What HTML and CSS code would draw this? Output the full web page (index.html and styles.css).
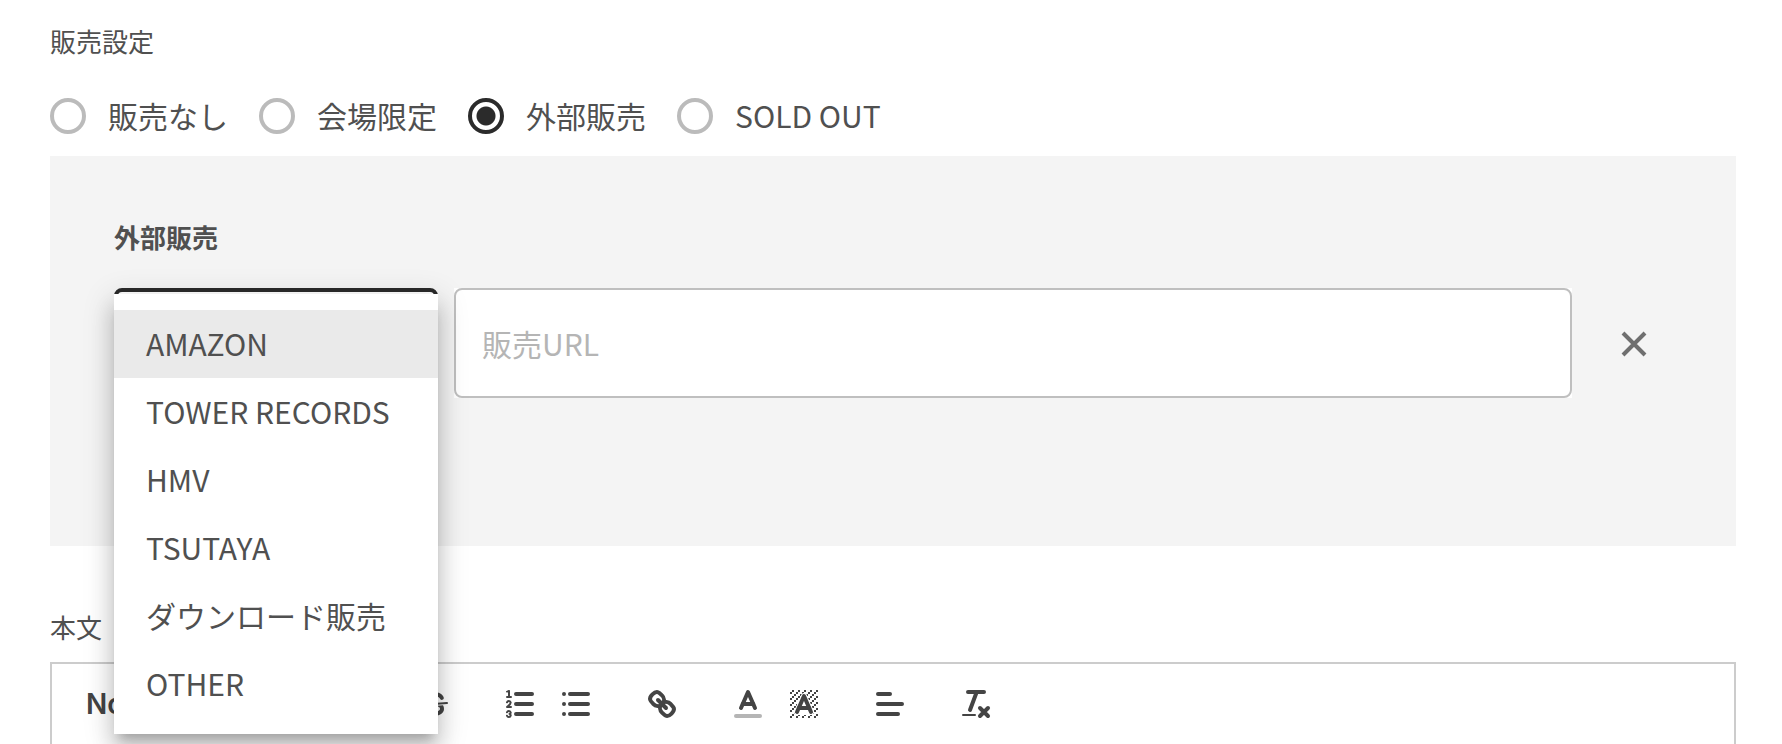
FILE: index.html
```html
<!DOCTYPE html>
<html lang="ja">
<head>
    <meta charset="utf-8">
    <meta name="viewport" content="width=device-width, initial-scale=1">
    <title>販売設定</title>
    <link rel="stylesheet" href="styles.css">
</head>
<body>
    <form class="page">
        <!-- Sales type -->
        <fieldset class="sales">
            <legend class="field-label">販売設定</legend>
            <div class="radio-group">
                <label class="radio"><input type="radio" name="sales" value="none"><span>販売なし</span></label>
                <label class="radio"><input type="radio" name="sales" value="venue"><span>会場限定</span></label>
                <label class="radio"><input type="radio" name="sales" value="external" checked><span>外部販売</span></label>
                <label class="radio"><input type="radio" name="sales" value="soldout"><span>SOLD OUT</span></label>
            </div>
        </fieldset>

        <!-- External shop links -->
        <section class="panel">
            <label class="panel-title" for="shop">外部販売</label>
            <div class="shop-row">
                <div class="shop-select">
                    <select id="shop">
                        <option value="" selected></option>
                        <option>AMAZON</option>
                        <option>TOWER RECORDS</option>
                        <option>HMV</option>
                        <option>TSUTAYA</option>
                        <option>ダウンロード販売</option>
                        <option>OTHER</option>
                    </select>
                    <div class="menu">
                        <button type="button" class="menu-item active">AMAZON</button>
                        <button type="button" class="menu-item">TOWER RECORDS</button>
                        <button type="button" class="menu-item">HMV</button>
                        <button type="button" class="menu-item">TSUTAYA</button>
                        <button type="button" class="menu-item">ダウンロード販売</button>
                        <button type="button" class="menu-item">OTHER</button>
                    </div>
                </div>
                <div class="url-field">
                    <input type="url" class="url-input" placeholder="販売URL" aria-label="販売URL">
                </div>
                <button type="button" class="remove" aria-label="削除">
                    <svg viewBox="0 0 36 36"><path d="M7 7 29 29M29 7 7 29"/></svg>
                </button>
            </div>
        </section>

        <!-- Body editor -->
        <label class="field-label" for="body-text">本文</label>
        <div class="editor">
            <div class="toolbar">
                <div class="format-group">
                    <button type="button" class="heading-picker">Normal</button>
                </div>
                <div class="format-group">
                    <button type="button" class="tool" aria-label="太字">
                        <svg viewBox="0 0 18 18">
                            <path d="M5,4H9.5A2.5,2.5,0,0,1,12,6.5v0A2.5,2.5,0,0,1,9.5,9H5V4Z"/>
                            <path d="M5,9h5.5A2.5,2.5,0,0,1,13,11.5v0A2.5,2.5,0,0,1,10.5,14H5V9Z"/>
                        </svg>
                    </button>
                    <button type="button" class="tool" aria-label="下線">
                        <svg viewBox="0 0 18 18">
                            <path d="M5,3V9a4.012,4.012,0,0,0,4,4H9a4.012,4.012,0,0,0,4-4V3"/>
                            <rect class="fill" x="3" y="15" width="12" height="1" rx="0.5"/>
                        </svg>
                    </button>
                    <button type="button" class="tool" aria-label="取り消し線">
                        <svg viewBox="0 0 18 18">
                            <line class="thin" x1="15.5" x2="2.5" y1="8.5" y2="9.5"/>
                            <path class="fill" d="M9.007,8C6.542,7.791,6,7.519,6,6.5,6,5.792,7.283,5,9,5c1.571,0,2.765.679,2.969,1.309a1,1,0,0,0,1.9-.617C13.356,4.106,11.354,3,9,3,6.2,3,4,4.538,4,6.5a3.2,3.2,0,0,0,.5,1.843Z"/>
                            <path class="fill" d="M8.984,10C11.457,10.208,12,10.479,12,11.5c0,0.708-1.283,1.5-3,1.5-1.571,0-2.765-.679-2.969-1.309a1,1,0,1,0-1.9.617C4.644,13.894,6.646,15,9,15c2.8,0,5-1.538,5-3.5a3.2,3.2,0,0,0-.5-1.843Z"/>
                        </svg>
                    </button>
                </div>
                <div class="format-group">
                    <button type="button" class="tool" aria-label="番号付きリスト">
                        <svg viewBox="0 0 18 18">
                            <path d="M7 4H15M7 9H15M7 14H15"/>
                            <path class="thin" d="M2.5 5.5H4.5"/>
                            <path class="fill" d="M3.5,6A0.5,0.5,0,0,1,3,5.5V3.085l-0.276.138A0.5,0.5,0,0,1,2.053,3c-0.124-.247-0.023-0.324.224-0.447l1-.5A0.5,0.5,0,0,1,4,2.5v3A0.5,0.5,0,0,1,3.5,6Z"/>
                            <path class="thin" d="M4.5,10.5h-2c0-.234,1.85-1.076,1.85-2.234A0.959,0.959,0,0,0,2.5,8.156"/>
                            <path class="thin" d="M2.5,14.846a0.959,0.959,0,0,0,1.85-.109A0.7,0.7,0,0,0,3.75,14a0.688,0.688,0,0,0,.6-0.736,0.959,0.959,0,0,0-1.85-.109"/>
                        </svg>
                    </button>
                    <button type="button" class="tool" aria-label="箇条書き">
                        <svg viewBox="0 0 18 18">
                            <path d="M6 4H15M6 9H15M6 14H15M3 4H3M3 9H3M3 14H3"/>
                        </svg>
                    </button>
                </div>
                <div class="format-group">
                    <button type="button" class="tool" aria-label="リンク">
                        <svg viewBox="0 0 18 18">
                            <line x1="7" x2="11" y1="7" y2="11"/>
                            <path d="M8.9,4.577a3.476,3.476,0,0,1,.36,4.679A3.476,3.476,0,0,1,4.577,8.9C3.185,7.5,2.035,6.4,4.217,4.217S7.5,3.185,8.9,4.577Z"/>
                            <path d="M13.423,9.1a3.476,3.476,0,0,0-4.679-.36,3.476,3.476,0,0,0,.36,4.679c1.392,1.392,2.5,2.542,4.679.36S14.815,10.5,13.423,9.1Z"/>
                        </svg>
                    </button>
                </div>
                <div class="format-group">
                    <button type="button" class="tool" aria-label="文字色">
                        <svg viewBox="0 0 18 18">
                            <line class="color-bar" x1="3" x2="15" y1="15" y2="15"/>
                            <polyline points="5.5 11 9 3 12.5 11"/>
                            <line x1="11.63" x2="6.38" y1="9" y2="9"/>
                        </svg>
                    </button>
                    <button type="button" class="tool" aria-label="背景色">
                        <svg viewBox="0 0 18 18">
                            <defs>
                                <pattern id="hatch" width="3" height="3" patternUnits="userSpaceOnUse" patternTransform="translate(2 2)">
                                    <path class="fill" d="M1 0h1v1h-1zM0 1h1v1h-1zM2 2h1v1h-1z"/>
                                </pattern>
                            </defs>
                            <rect class="hatch" x="2" y="2" width="14" height="14"/>
                            <polygon class="halo" points="5.5 13 9 5 12.5 13"/>
                            <polyline points="5.5 13 9 5 12.5 13"/>
                            <line x1="11.63" x2="6.38" y1="11" y2="11"/>
                        </svg>
                    </button>
                </div>
                <div class="format-group">
                    <button type="button" class="tool" aria-label="配置">
                        <svg viewBox="0 0 18 18">
                            <path d="M3 4H9M3 9H15M3 14H13"/>
                        </svg>
                    </button>
                </div>
                <div class="format-group">
                    <button type="button" class="tool" aria-label="書式をクリア">
                        <svg viewBox="0 0 18 18">
                            <path d="M5 3H13M6 12 9.35 3M11 11 15 15M15 11 11 15"/>
                            <rect class="fill" x="2" y="14" width="7" height="1" rx="0.5"/>
                        </svg>
                    </button>
                </div>
            </div>
            <textarea id="body-text" class="editor-text"></textarea>
        </div>
    </form>
</body>
</html>
```
FILE: styles.css
```css
* {
    box-sizing: border-box;
}

html {
    height: 100%;
    overflow: hidden;
}

body {
    margin: 0;
    height: 100%;
    overflow: hidden;
    background-color: #fff;
    color: #505050;
    font-family: "Noto Sans CJK JP", sans-serif;
    font-size: 30px;
    line-height: 44px;
}

button,
input,
select,
textarea {
    font: inherit;
    color: inherit;
}

button {
    border: none;
    background: none;
    padding: 0;
    cursor: pointer;
}

.page {
    padding: 20px 46px 0 50px;
}

.field-label {
    display: block;
    padding: 0;
    font-size: 26px;
    line-height: 42px;
}

/* Radio buttons */
.sales {
    margin: 0;
    padding: 0;
    border: none;
}

.radio-group {
    display: flex;
    gap: 31px;
    padding: 32px 0 18px;
}

.radio {
    display: flex;
    align-items: center;
    gap: 22px;
}

.radio span {
    padding-bottom: 2px;
    line-height: 42px;
}

.radio input {
    appearance: none;
    width: 36px;
    height: 36px;
    margin: 0;
    border: 4px solid #bbb;
    border-radius: 50%;
}

.radio input:checked {
    border-color: #2b2b2b;
    background: radial-gradient(circle, #2b2b2b 9px, transparent 10px);
}

/* Grey panel */
.panel {
    padding: 60px 64px 148px;
    margin-bottom: 60px;
    background-color: #f4f4f4;
}

.panel-title {
    display: block;
    margin-bottom: 30px;
    font-size: 26px;
    font-weight: bold;
    line-height: 42px;
}

.shop-row {
    display: flex;
    align-items: center;
    gap: 16px;
}

.shop-select {
    position: relative;
    flex: 0 0 324px;
}

.shop-select select {
    display: block;
    appearance: none;
    width: 100%;
    height: 110px;
    padding: 0 28px;
    border: 4px solid #2b2b2b;
    border-radius: 8px;
    background-color: #fff;
}

.menu {
    position: absolute;
    top: 6px;
    left: 0;
    right: 0;
    z-index: 1;
    padding: 16px 0;
    background-color: #fff;
    box-shadow: 0 10px 10px -6px rgba(0, 0, 0, 0.2), 0 16px 20px 2px rgba(0, 0, 0, 0.14), 0 6px 28px 4px rgba(0, 0, 0, 0.12);
}

.menu-item {
    display: block;
    width: 100%;
    height: 68px;
    padding: 0 32px 2px;
    text-align: left;
}

.menu-item.active {
    background-color: #eaeaea;
}

.url-field {
    flex: 1;
    background-color: #fff;
}

.url-input {
    display: block;
    width: 100%;
    height: 110px;
    padding: 0 26px;
    border: 2px solid #bfbfbf;
    border-radius: 8px;
    background-color: #fff;
}

.url-input::placeholder {
    color: #b5b5b5;
    opacity: 1;
}

.remove {
    display: flex;
    align-items: center;
    justify-content: flex-end;
    width: 84px;
    height: 84px;
    padding: 2px 20px 0 0;
}

.remove svg {
    width: 36px;
    height: 36px;
    fill: none;
    stroke: #6f6f6f;
    stroke-width: 4;
}

/* Editor */
.editor {
    margin-top: 14px;
    border: 2px solid #ccc;
}

.toolbar {
    display: flex;
    padding: 16px;
}

.format-group {
    display: flex;
    margin-right: 30px;
}

.heading-picker {
    width: 196px;
    height: 48px;
    padding: 0 18px;
    color: #444;
    font-family: Inter, sans-serif;
    font-size: 28px;
    font-weight: 600;
    text-align: left;
}

.tool {
    width: 56px;
    height: 48px;
    padding: 6px 10px;
}

.tool svg {
    display: block;
    width: 36px;
    height: 36px;
    fill: none;
    stroke: #444;
    stroke-width: 2;
    stroke-linecap: round;
    stroke-linejoin: round;
}

.tool .thin {
    stroke-width: 1;
}

.tool .fill {
    fill: #444;
    stroke: none;
}

.tool .color-bar {
    stroke: #b5b5b5;
}

.tool .hatch {
    fill: url(#hatch);
    stroke: none;
}

.tool .halo {
    fill: #fff;
    stroke: #fff;
    stroke-width: 3;
}

.editor-text {
    display: block;
    width: 100%;
    height: 400px;
    padding: 24px 30px;
    border: none;
    resize: none;
}
```
